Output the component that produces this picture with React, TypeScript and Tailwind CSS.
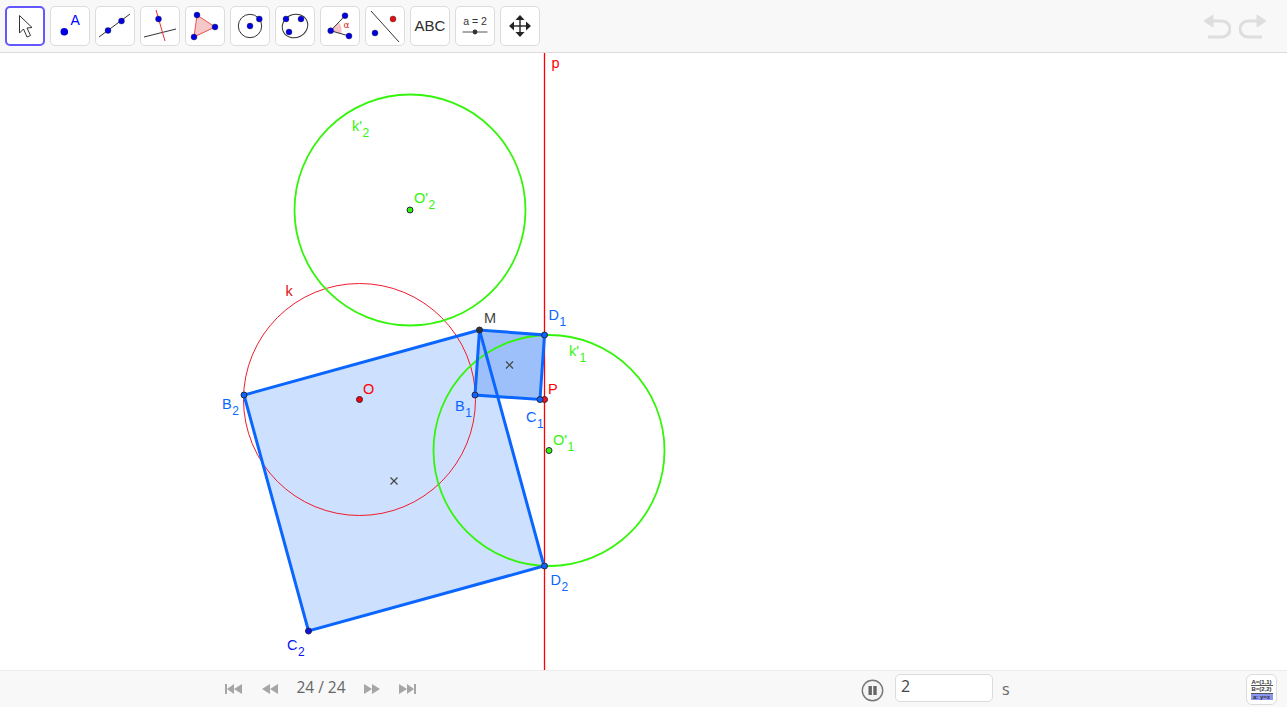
import React from "react";

const B = "#0000e0";
const GREEN = "#33f50a";
const BLUE = "#0a66ff";
const Dot = ({ x, y, r = 3, f = "#0a14d8" }: { x: number; y: number; r?: number; f?: string }) => (
  <circle cx={x} cy={y} r={r} fill={f} stroke="#262640" strokeWidth={1} />
);
const T = ({ x, y, f = B }: { x: number; y: number; f?: string }) => (
  <circle cx={x} cy={y} r={3} fill={f} stroke="#333" strokeWidth={0.4} />
);

const tools: React.ReactNode[] = [
  <path key="a" d="M14.5 9.5 L14.5 27 L18.5 23 L22 31 L25.5 29.5 L22 22 L27 21.5 Z" fill="#fff" stroke="#333" strokeWidth={1} />,
  <g key="b">
    <circle cx={14.3} cy={25.7} r={3.8} fill={B} />
    <text x={20.5} y={19} fontSize={14} fill="#0000ff" fontFamily="'Liberation Sans', sans-serif">A</text>
  </g>,
  <g key="c">
    <line x1={4} y1={31} x2={35} y2={8} stroke="#333" strokeWidth={1} />
    <T x={13} y={24.5} />
    <T x={26.5} y={15} />
  </g>,
  <g key="d">
    <line x1={4} y1={31} x2={36} y2={23} stroke="#333" strokeWidth={1} />
    <line x1={16} y1={4} x2={25} y2={35} stroke="#f03030" strokeWidth={1} />
    <T x={18.5} y={13} />
  </g>,
  <g key="e">
    <polygon points="12,9 30,21 9,31" fill="#f4c8c8" stroke="#f05050" strokeWidth={1} />
    <T x={12} y={9} />
    <T x={30} y={21} />
    <T x={9} y={31} />
  </g>,
  <g key="f">
    <circle cx={20} cy={20} r={11.7} fill="none" stroke="#333" strokeWidth={1} />
    <T x={20} y={20} />
    <T x={29.3} y={13} />
  </g>,
  <g key="g">
    <ellipse cx={20} cy={20} rx={13} ry={11.5} transform="rotate(-25 20 20)" fill="none" stroke="#333" strokeWidth={1} />
    <T x={11} y={13} />
    <T x={26} y={13} />
    <T x={14} y={26} />
  </g>,
  <g key="h">
    <path d="M10.7 24.7 L19 16.5 A13 13 0 0 1 21 28 Z" fill="#f6c6c6" stroke="none" />
    <path d="M25 9.7 L10.7 24.7 L29 30" fill="none" stroke="#333" strokeWidth={1} />
    <T x={25} y={9.7} />
    <T x={10.7} y={24.7} />
    <T x={29} y={30} />
    <text x={23.5} y={22} fontSize={9} fill="#e02020" fontFamily="'DejaVu Sans', sans-serif">α</text>
  </g>,
  <g key="i">
    <line x1={6} y1={5} x2={34} y2={36} stroke="#333" strokeWidth={1} />
    <T x={10} y={27} />
    <T x={28} y={13} f="#e01010" />
  </g>,
  <text key="j" x={20} y={25} textAnchor="middle" fontSize={15} fill="#2b2b2b" fontFamily="'Liberation Sans', sans-serif">ABC</text>,
  <g key="k">
    <text x={20} y={19} textAnchor="middle" fontSize={10.5} fill="#333" fontFamily="'Liberation Sans', sans-serif">a = 2</text>
    <line x1={7.5} y1={26} x2={32.5} y2={26} stroke="#555" strokeWidth={1} />
    <circle cx={20} cy={26} r={2.4} fill="#333" />
  </g>,
  <g key="l" fill="#222">
    <line x1={20} y1={12} x2={20} y2={28} stroke="#222" strokeWidth={1.4} />
    <line x1={12} y1={20} x2={28} y2={20} stroke="#222" strokeWidth={1.4} />
    <polygon points="20,9 15.5,14 24.5,14" />
    <polygon points="20,31 15.5,26 24.5,26" />
    <polygon points="9,20 14,15.5 14,24.5" />
    <polygon points="31,20 26,15.5 26,24.5" />
  </g>,
];

const Lbl = ({ x, y, t, sub, c }: { x: number; y: number; t: string; sub?: string; c: string }) => (
  <text x={x} y={y} fontSize={14.5} fill={c} fontFamily="'Liberation Sans', sans-serif">
    {t}
    {sub && <tspan dy={5.5} dx={0.5} fontSize={12}>{sub}</tspan>}
  </text>
);

const Cross = ({ x, y }: { x: number; y: number }) => (
  <path d={`M${x - 3.5} ${y - 3.5} L${x + 3.5} ${y + 3.5} M${x + 3.5} ${y - 3.5} L${x - 3.5} ${y + 3.5}`} stroke="#444" strokeWidth={1.2} />
);

const Geometry = () => (
  <svg viewBox="0 53 1287 617" className="block w-full h-full">
    <polygon points="479.5,330 244,395 308.5,631 544,566" fill="#cde0fd" />
    <polygon points="479.5,330 475,395 540,399.5 544.5,335" fill="#9dc0fa" />
    <circle cx={359.5} cy={399.5} r={116} fill="none" stroke="#f01c2e" strokeWidth={1} />
    <circle cx={410} cy={210} r={115.5} fill="none" stroke={GREEN} strokeWidth={1.8} />
    <circle cx={549} cy={450.5} r={115.5} fill="none" stroke={GREEN} strokeWidth={1.8} />
    <line x1={544.5} y1={53} x2={544.5} y2={670} stroke="#ff0000" strokeWidth={1.3} />
    <polygon points="479.5,330 244,395 308.5,631 544,566" fill="none" stroke={BLUE} strokeWidth={3} />
    <polygon points="479.5,330 475,395 540,399.5 544.5,335" fill="none" stroke={BLUE} strokeWidth={3} />
    <Cross x={509.5} y={365} />
    <Cross x={394} y={481} />
    <Dot x={544.5} y={399.5} f="#ff1010" />
    <Dot x={359.5} y={399.5} f="#ff0000" />
    <Dot x={410} y={210} f={GREEN} />
    <Dot x={549} y={450.5} f={GREEN} />
    <Dot x={479.5} y={330} f="#333" />
    <Dot x={244} y={395} f={BLUE} />
    <Dot x={475} y={395} f={BLUE} />
    <Dot x={540} y={399.5} f={BLUE} />
    <Dot x={544.5} y={335} f={BLUE} />
    <Dot x={544.5} y={566} f={BLUE} />
    <Dot x={308.5} y={631} f="#0a14e8" />
    <Lbl x={551.5} y={68} t="p" c="#ff0000" />
    <Lbl x={352} y={131} t="k'" sub="2" c={GREEN} />
    <Lbl x={414} y={203} t="O'" sub="2" c={GREEN} />
    <Lbl x={285.5} y={296} t="k" c="#e01010" />
    <Lbl x={484} y={323} t="M" c="#444" />
    <Lbl x={548.5} y={320} t="D" sub="1" c={BLUE} />
    <Lbl x={569} y={356} t="k'" sub="1" c={GREEN} />
    <Lbl x={548} y={394} t="P" c="#ff0000" />
    <Lbl x={363} y={394} t="O" c="#ff0000" />
    <Lbl x={222} y={409} t="B" sub="2" c={BLUE} />
    <Lbl x={455} y={411} t="B" sub="1" c={BLUE} />
    <Lbl x={526} y={422} t="C" sub="1" c={BLUE} />
    <Lbl x={553} y={445} t="O'" sub="1" c={GREEN} />
    <Lbl x={550.5} y={585} t="D" sub="2" c={BLUE} />
    <Lbl x={287} y={650} t="C" sub="2" c="#0a14f0" />
  </svg>
);

const Tri = ({ d }: { d: string }) => (
  <svg width="18" height="12" viewBox="0 0 18 12"><path d={d} fill="#a6a6a6" /></svg>
);

export default function App() {
  return (
    <div className="w-[1287px] h-[707px] flex flex-col bg-white overflow-hidden font-['Open_Sans',sans-serif]">
      <div className="h-[53px] shrink-0 bg-[#f8f8f8] border-b border-[#dcdcdc] flex items-start justify-between pt-[6px] pl-[5px] pr-[20px]">
        <div className="flex gap-[5px]">
          {tools.map((t, i) => (
            <div key={i} className={i === 0 ? "w-10 h-10 rounded-[5px] bg-white border-2 border-[#6557ff]" : "w-10 h-10 rounded-[5px] bg-white border border-[#dcdcdc]"}>
              <svg viewBox="0 0 40 40" className={i === 0 ? "block w-10 h-10 -m-[2px]" : "block w-10 h-10 -m-px"}>{t}</svg>
            </div>
          ))}
        </div>
        <div className="flex gap-[8px] pt-[7px]">
          <svg width="28" height="26" viewBox="0 0 28 26" fill="none" stroke="#dedede" strokeWidth="3">
            <path d="M3 8 H19 A8 8 0 0 1 19 24 H5" />
            <path d="M10 2 L1 8 L10 14 Z" fill="#dedede" strokeWidth="1" />
          </svg>
          <svg width="28" height="26" viewBox="0 0 28 26" fill="none" stroke="#dedede" strokeWidth="3">
            <path d="M25 8 H9 A8 8 0 0 0 9 24 H23" />
            <path d="M18 2 L27 8 L18 14 Z" fill="#dedede" strokeWidth="1" />
          </svg>
        </div>
      </div>
      <div className="h-[617px] shrink-0"><Geometry /></div>
      <div className="h-[37px] shrink-0 bg-[#f8f8f8] border-t border-[#ececec] flex items-center relative">
        <div className="ml-[225px] flex items-center">
          <Tri d="M0 1 H2 V11 H0 Z M2 6 L9 1 V11 Z M9 6 L17 1 V11 Z" />
          <div className="w-[18px]" />
          <Tri d="M1 6 L9 1 V11 Z M9 6 L17 1 V11 Z" />
          <span className="ml-[12px] w-[60px] text-center text-[15.5px] leading-5 text-[#666] -mt-[4px]">24 / 24</span>
          <div className="w-[12px]" />
          <Tri d="M1 1 L9 6 L1 11 Z M9 1 L17 6 L9 11 Z" />
          <div className="w-[18px]" />
          <Tri d="M0 1 L8 6 L0 11 Z M8 1 L15 6 L8 11 Z M15 1 H17 V11 H15 Z" />
        </div>
        <div className="absolute left-[861px] top-[7px] flex items-center">
          <svg width="23" height="23" viewBox="0 0 23 23">
            <circle cx="11.5" cy="11.5" r="10.2" fill="#f4f4f4" stroke="#777" strokeWidth="1.4" />
            <rect x="7.5" y="7" width="3.4" height="9" fill="#666" />
            <rect x="12.3" y="7" width="3.4" height="9" fill="#666" />
          </svg>
          <div className="ml-[11px] -mt-[4px] w-[98px] h-[28px] rounded-[5px] bg-white border border-[#dcdcdc] pl-[5px] text-[16px] leading-[22px] text-[#444]">2</div>
          <span className="ml-[9px] -mt-[3px] text-[16px] text-[#666]">s</span>
        </div>
        <div className="absolute right-[10px] top-[3px] w-[31px] h-[31px] rounded-[6px] bg-white border border-[#dcdcdc] flex flex-col items-center justify-center font-['Liberation_Sans',sans-serif] text-[6px] leading-[7px] font-bold text-[#333]">
          <span className="border-b border-[#555] w-[22px] text-center leading-[6px]">A=(1,1)</span>
          <span className="border-b border-[#555] w-[22px] text-center leading-[7px]">B=(2,2)</span>
          <span className="bg-[#8b95f2] w-[22px] text-center leading-[6px]">a: y=x</span>
        </div>
      </div>
    </div>
  );
}
